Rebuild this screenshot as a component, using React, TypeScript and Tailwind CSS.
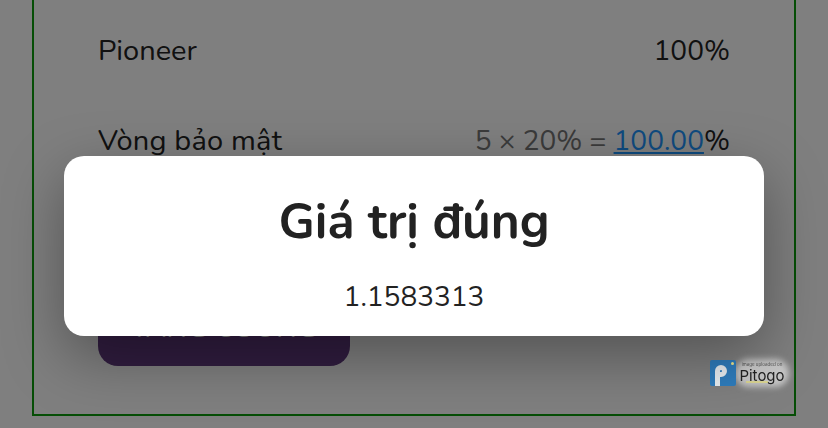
const font = "font-['Nunito','Lato','Noto_Sans',sans-serif]";

function PitogoBadge() {
  return (
    <div className="absolute left-[710px] top-[360px] flex h-[26px] items-center blur-[0.4px]">
      <div className="relative z-10 h-[26px] w-[26px] rounded-[2px] bg-[#2f7dbd]">
        <svg width="26" height="26" viewBox="0 0 26 26" fill="none">
          <path d="M7.5 26V11a3.5 3.5 0 1 1 3.5 3.5H10" stroke="#e8eef2" strokeWidth="5" />
        </svg>
        <div className="absolute right-[2px] top-[2px] h-[3px] w-[3px] rounded-full bg-[#f0e68c]" />
      </div>
      <div className="relative h-[26px] w-[52px]">
        <div className="absolute inset-[-1px] rounded-full bg-[#c8c8c8] blur-[3px]" />
        <div className="relative flex h-full flex-col items-center pt-[2px] font-['Inter',sans-serif]">
          <span className="text-[4.5px] leading-[6px] text-[#555555]">image uploaded on</span>
          <span className="text-[15px] leading-[15px] text-[#222222]">Pitogo</span>
          <div className="absolute left-[10px] top-[21px] h-[2px] w-[22px] bg-[#e8e070]/60" />
        </div>
      </div>
    </div>
  );
}

export default function App() {
  return (
    <div className={`relative h-[428px] w-[828px] overflow-hidden bg-[#ffffff] ${font}`}>
      <div className="flex h-full flex-col justify-end px-[32px] pb-[12px]">
        <div className="flex h-[440px] shrink-0 flex-col justify-end border-2 border-[#0c9c0c] px-[64px] pb-[48px]">
          <div className="flex items-center justify-between leading-[36px] text-[#222222]">
            <span className="text-[29px]">Pioneer</span>
            <span className="text-[28px]">100%</span>
          </div>
          <div className="mt-[54px] flex items-center justify-between leading-[36px] text-[#222222]">
            <span className="text-[29px] tracking-[0.2px]">Vòng bảo mật</span>
            <span className="text-[28px]">
              <span className="text-[#777777]">5 × 20% = </span>
              <span className="text-[#1e96ff] underline">100.00</span>%
            </span>
          </div>
          <button className="mt-[131px] flex h-[76px] w-[252px] items-center justify-center rounded-[20px] bg-[#623a80] text-[28px] font-semibold text-white">
            TĂNG CƯỜNG
          </button>
        </div>
      </div>

      <div className="absolute inset-0 bg-black/50" />
      <PitogoBadge />

      <div className="absolute left-[64px] top-[156px] flex h-[180px] w-[700px] flex-col items-center rounded-[20px] bg-white shadow-[0_20px_60px_rgba(0,0,0,0.35)]">
        <h2 className="mt-[36px] text-[49.5px] font-bold leading-[60px] text-[#222222]">Giá trị đúng</h2>
        <p className="mt-[27px] text-[28px] leading-[36px] text-[#222222]">1.1583313</p>
      </div>
    </div>
  );
}
